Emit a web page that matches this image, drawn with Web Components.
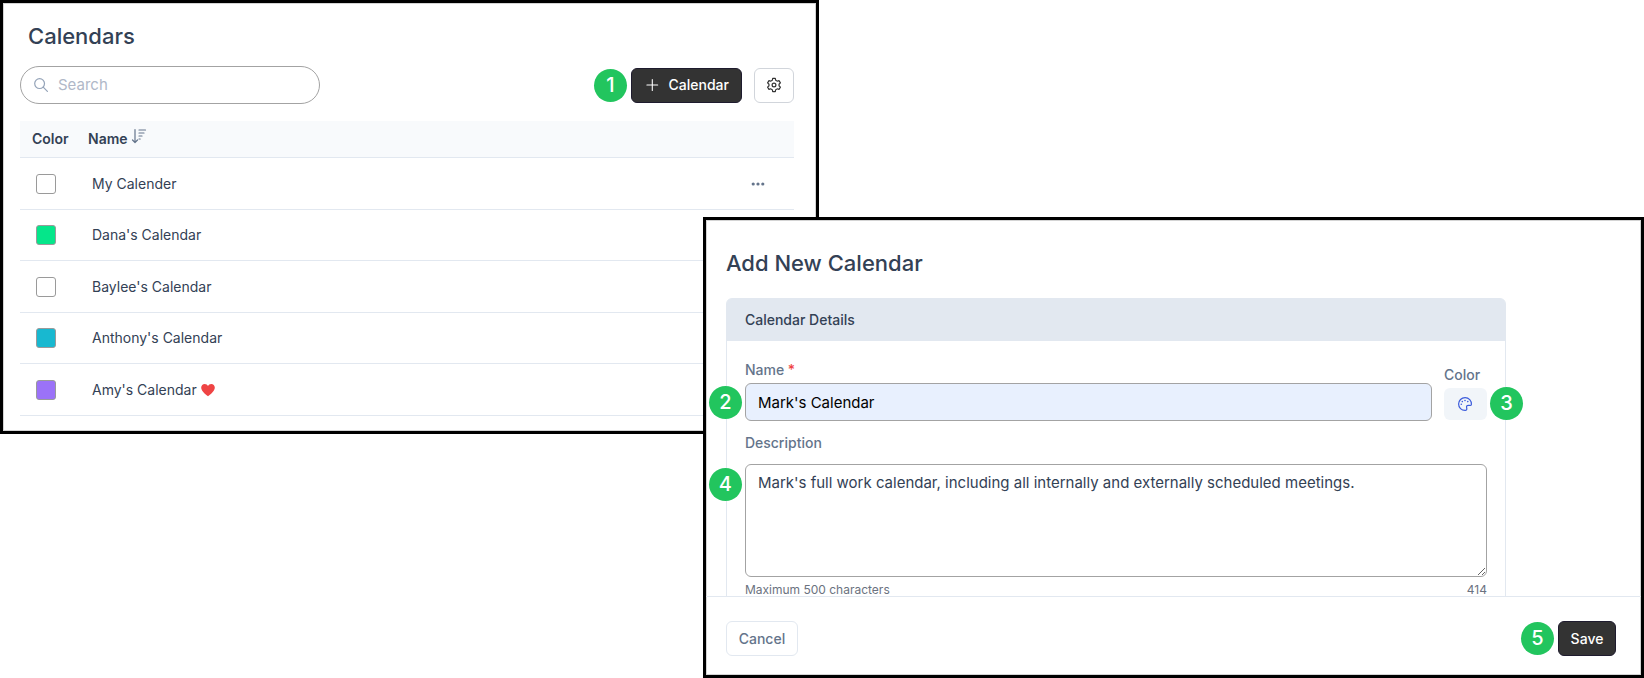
<!DOCTYPE html>
<html lang="en">
<head>
<meta charset="utf-8">
<meta name="viewport" content="width=device-width, initial-scale=1">
<title>Calendars</title>
<style>
  body { margin: 0; background: #fff; color: #334155; font: 14px/20px Inter, "Liberation Sans", sans-serif; }
</style>
</head>
<body>
<calendar-app></calendar-app>
<script>
const define = (name, markup, setup) => {
  const template = document.createElement('template');
  template.innerHTML = '<style>*{box-sizing:border-box}</style>' + markup;
  customElements.define(name, class extends HTMLElement {
    constructor() {
      super();
      this.attachShadow({ mode: 'open' }).append(template.content.cloneNode(true));
    }
    connectedCallback() { if (setup) setup(this, this.shadowRoot); }
  });
};

/* Line icons, 14-unit grid */
const ICONS = {
  search: '<circle cx="5.6" cy="5.6" r="4.9"/><path d="M9.2 9.2l4.2 4.2"/>',
  plus: '<path d="M7 1v12M1 7h12"/>',
  gear: '<circle cx="7" cy="7" r="1.9"/><path d="M5.7 .4h2.6l.4 1.9q.8.3 1.4.9l1.900-.6 1.400 2.300-1.400 1.300q.2.800 0 1.600l1.400 1.300-1.400 2.300-1.900-.6q-.6.600-1.400.900l-.4 1.900H5.700l-.4-1.900q-.8-.3-1.400-.9l-1.900.6L.6 9.100l1.400-1.300q-.2-.8 0-1.600L.6 4.900 2 2.600l1.900.6q.6-.6 1.400-.9z"/>',
  sort: '<path d="M3 .5v13M.5 11L3 13.500 5.500 11M7 1h6.500M7 4h5M7 7h3M7 10h1.200"/>',
  dots: '<g fill="currentColor" stroke="none"><circle cx="2.200" cy="7" r="1.600"/><circle cx="7" cy="7" r="1.600"/><circle cx="11.800" cy="7" r="1.600"/></g>',
  palette: '<path d="M7.300 13.400C3.400 13.500.6 10.700.6 7.100.6 3.400 3.500.6 7.100.6c3.700 0 6.600 3 6.300 6.900-.1.800-.6 1-1.300 1-1.200-.1-2.600-.4-3.300.4-.6.800-.1 1.700 0 2.700.1 1-.4 1.800-1.500 1.800z"/><g fill="currentColor" stroke="none"><circle cx="3.300" cy="7.200" r=".8"/><circle cx="4.300" cy="4.600" r=".8"/><circle cx="7" cy="3.500" r=".8"/><circle cx="9.800" cy="4.600" r=".8"/></g>',
  heart: '<path fill="currentColor" stroke="none" d="M7 13.300C3.500 10.600.2 7.900.2 4.600.2 2.300 1.800.9 3.700.9 5.200.9 6.400 1.700 7 3 7.600 1.700 8.800.9 10.300.9c1.900 0 3.500 1.400 3.500 3.700 0 3.300-3.300 6-6.800 8.700z"/>'
};
define('ui-icon', `
  <style>:host{display:inline-flex;width:14px;height:14px} svg{width:100%;height:100%;overflow:visible}</style>
  <svg viewBox="0 0 14 14" fill="none" stroke="currentColor" stroke-width="1.2" stroke-linecap="round" stroke-linejoin="round" aria-hidden="true"></svg>`,
  (el, root) => { root.querySelector('svg').innerHTML = ICONS[el.getAttribute('name')]; });

define('step-badge', `
  <style>:host{display:flex;flex:none;align-items:center;justify-content:center;width:33px;height:33px;border-radius:50%;background:#22c55e;color:#fff;font-size:20px;line-height:33px;font-weight:500}</style>
  <slot></slot>`);

define('ui-button', `
  <style>
    :host{display:inline-flex}
    button{display:flex;align-items:center;justify-content:center;gap:10px;width:100%;height:35px;padding:0 12px;border:1px solid #e2e8f0;border-radius:6px;background:#fff;color:#64748b;font:inherit;font-weight:500;white-space:nowrap}
    :host([kind=primary]) button{background:#333;border-color:#1e1b2e;color:#fff}
    :host([kind=icon]) button{border-color:#d1d5db;color:#333}
    :host([wide]) button{padding:0 12px 0 14px}
  </style>
  <button type="button"><slot></slot></button>`,
  (el, root) => { if (el.title) root.querySelector('button').setAttribute('aria-label', el.title); });

define('app-window', `
  <style>
    :host{display:flex;flex-direction:column;box-sizing:border-box;border:3px solid #000;background:#fff;box-shadow:inset 0 0 0 1px #d4d4d4}
    h1{margin:0;font-size:22px;line-height:32px;font-weight:500}
    header{padding:var(--title-padding)}
  </style>
  <header><h1><slot name="title"></slot></h1></header>
  <slot></slot>`);

define('search-field', `
  <style>
    :host{display:block}
    label{display:flex;align-items:center;gap:10px;height:38px;padding:0 13px;border:1px solid #a3a3a3;border-radius:19px;color:#94a3b8}
    input{flex:1;min-width:0;padding:0;border:0;outline:0;background:none;font:inherit;font-size:15px;color:#334155}
    input::placeholder{color:#b0b8c8}
  </style>
  <label><ui-icon name="search"></ui-icon><input type="text" placeholder="Search" aria-label="Search"></label>`);

define('calendar-list', `
  <style>
    :host{display:block}
    table{width:100%;border-collapse:separate;border-spacing:0;table-layout:fixed}
    th,td{padding:0 12px;border-bottom:1px solid #e2e8f0;text-align:left;white-space:nowrap}
    th{height:37px;background:#f8fafc;font-weight:600}
    th:first-child{width:56px}
    th:last-child{width:59px}
    td{height:52px;padding:0 16px}
    tr:nth-child(even) td{height:51px}
    .sorted{display:flex;align-items:flex-start;gap:4px;color:#64748b}
    .sorted span{color:#334155}
    i{display:block;width:20px;height:20px;border:1px solid #9a9a9a;border-radius:3px;background:var(--swatch,#fff)}
    button{display:flex;padding:0;border:0;background:none;color:#64748b}
    .heart{color:#ef4444;margin-left:4px;vertical-align:-2px}
  </style>
  <table>
    <thead><tr><th scope="col">Color</th><th scope="col"><div class="sorted"><span>Name</span><ui-icon name="sort"></ui-icon></div></th><th></th></tr></thead>
    <tbody></tbody>
  </table>`,
  (el, root) => {
    const rows = [['My Calender', '#fff', '', true], ["Dana's Calendar", '#05e68a'], ["Baylee's Calendar", '#fff'],
      ["Anthony's Calendar", '#18b8d0'], ["Amy's Calendar", '#9b72f8', '<ui-icon class="heart" name="heart"></ui-icon>']];
    root.querySelector('tbody').innerHTML = rows.map(([name, color, extra = '', menu]) => `
      <tr><td><i style="--swatch:${color}"></i></td><td>${name}${extra}</td>
      <td>${menu ? '<button type="button" aria-label="More"><ui-icon name="dots"></ui-icon></button>' : ''}</td></tr>`).join('');
  });

define('calendars-view', `
  <style>
    :host{display:block;padding:0 22px 0 17px}
    .toolbar{display:flex;align-items:center;margin-bottom:17px}
    search-field{flex:0 1 300px}
    .actions{display:flex;align-items:center;margin-left:auto}
    .add{margin:0 12px 0 4px;width:111px}
    .settings{width:40px}
  </style>
  <div class="toolbar">
    <search-field></search-field>
    <div class="actions">
      <step-badge>1</step-badge>
      <ui-button class="add" kind="primary" wide><ui-icon name="plus"></ui-icon>Calendar</ui-button>
      <ui-button class="settings" kind="icon" title="Settings"><ui-icon name="gear"></ui-icon></ui-button>
    </div>
  </div>
  <calendar-list></calendar-list>`);

define('calendar-form', `
  <style>
    :host{display:flex;flex-direction:column;flex:1;min-height:0}
    .body{flex:1;min-height:0;overflow:hidden;padding:0 20px}
    section{max-width:780px;height:320px;border:1px solid #e2e8f0;border-radius:6px}
    h2{margin:0;padding:11px 18px;background:#e2e8f0;font-size:14px;line-height:20px;font-weight:500;border-radius:4px 4px 0 0}
    .fields{padding:19px 18px 0}
    .row{display:grid;grid-template-columns:1fr 43px;column-gap:12px}
    .field{position:relative}
    label{display:block;color:#64748b;font-weight:500;line-height:20px}
    em{color:#ef4444;font-style:normal}
    input,textarea{display:block;width:100%;margin:0;border:1px solid #a3a3a3;border-radius:6px;background:#fff;color:#334155;font:inherit;font-size:15px;line-height:24px}
    input{height:38px;margin-top:3px;padding:0 12px;background:#e8f0fe;color:#000}
    textarea{height:113px;margin-top:11px;padding:6px 12px}
    .color{padding-top:5px}
    .color button{display:flex;align-items:center;justify-content:center;width:100%;height:32px;margin-top:3px;padding:0;border:0;border-radius:6px;background:#f1f5f9;color:#3b5bdb}
    .description{margin-top:12px}
    .help{display:flex;justify-content:space-between;margin-top:5px;color:#6b7280;font-size:12px;line-height:16px}
    step-badge{position:absolute}
    .before{right:100%;margin-right:3px}
    .name .before{bottom:2px}
    .after{left:100%;bottom:1px;margin-left:3px}
    .description .before{top:35px}
    footer{display:flex;align-items:center;padding:24px 25px 19px 20px;border-top:1px solid #e2e8f0}
    .cancel{width:72px}
    .save{width:58px;margin-left:4px}
    footer step-badge{position:static;margin-left:auto}
  </style>
  <div class="body">
    <section>
      <h2>Calendar Details</h2>
      <div class="fields">
        <div class="row">
          <div class="field name">
            <label for="name">Name <em>*</em></label>
            <input id="name" type="text" value="Mark's Calendar">
            <step-badge class="before">2</step-badge>
          </div>
          <div class="field color">
            <label for="color">Color</label>
            <button id="color" type="button"><ui-icon name="palette"></ui-icon></button>
            <step-badge class="after">3</step-badge>
          </div>
        </div>
        <div class="field description">
          <label for="description">Description</label>
          <textarea id="description">Mark's full work calendar, including all internally and externally scheduled meetings.</textarea>
          <step-badge class="before">4</step-badge>
        </div>
        <div class="help"><span>Maximum 500 characters</span><span>414</span></div>
      </div>
    </section>
  </div>
  <footer>
    <ui-button class="cancel">Cancel</ui-button>
    <step-badge>5</step-badge>
    <ui-button class="save" kind="primary">Save</ui-button>
  </footer>`);

/* Two overlapping windows sharing one grid cell */
define('calendar-app', `
  <style>
    :host{display:grid;align-items:start}
    app-window{grid-area:1/1}
    .list{--title-padding:17px 25px 14px;width:calc(50% - 3px);padding-bottom:15px}
    .editor{--title-padding:27px 20px 19px;justify-self:end;width:calc(57% + 4px);height:461px;margin-top:217px}
  </style>
  <app-window class="list"><span slot="title">Calendars</span><calendars-view></calendars-view></app-window>
  <app-window class="editor"><span slot="title">Add New Calendar</span><calendar-form></calendar-form></app-window>`);
</script>
</body>
</html>
